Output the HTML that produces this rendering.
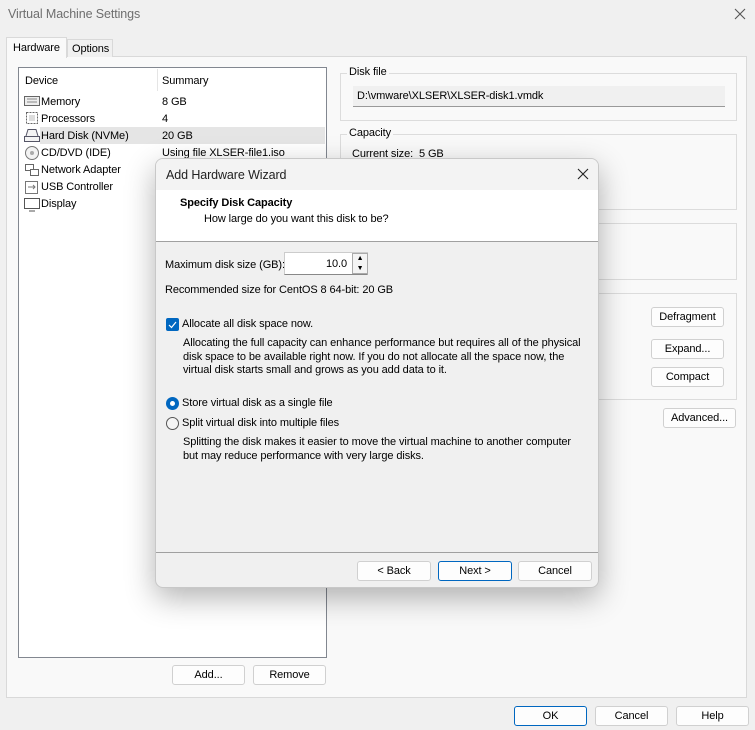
<!DOCTYPE html>
<html><head><meta charset="utf-8"><style>
*{box-sizing:border-box;margin:0;padding:0}
body{width:755px;height:730px;background:#f0f0f0;font-family:"Liberation Sans",sans-serif;font-size:11px;letter-spacing:-0.1px;color:#000;position:relative;overflow:hidden}
.a{position:absolute;white-space:nowrap}
.btn{position:absolute;height:20px;background:#fdfdfd;border:1px solid #d0d0d0;border-radius:3px;text-align:center;line-height:18px}
.grp{position:absolute;border:1px solid #dcdcdc}
.lg{position:absolute;top:-8px;left:6px;background:#f9f9f9;padding:0 2px}
</style></head><body>
<div class="a" style="left:8px;top:7px;font-size:12.5px;color:#6e6e6e">Virtual Machine Settings</div>
<svg class="a" style="left:734px;top:8px" width="12" height="12"><path d="M1 1L11 11M11 1L1 11" stroke="#555" stroke-width="1.1"/></svg>

<div class="a" style="left:6px;top:56px;width:741px;height:642px;background:#f9f9f9;border:1px solid #d9d9d9"></div>
<div class="a" style="left:6px;top:37px;width:61px;height:21px;background:#f9f9f9;border:1px solid #d9d9d9;border-bottom:none;padding:4px 0 0 6px">Hardware</div>
<div class="a" style="left:67px;top:39px;width:46px;height:18px;background:#f0f0f0;border:1px solid #d9d9d9;border-bottom:none;padding:3px 0 0 4px">Options</div>

<div class="a" style="left:18px;top:67px;width:309px;height:591px;background:#fff;border:1px solid #828790"></div>
<div class="a" style="left:157px;top:69px;width:1px;height:22px;background:#e5e5e5"></div>
<div class="a" style="left:25px;top:75px">Device</div>
<div class="a" style="left:162px;top:75px">Summary</div>
<div class="a" style="left:40px;top:127px;width:285px;height:17px;background:#e5e5e5"></div>
<svg class="a" style="left:24px;top:95px" width="16" height="120">
<rect x="0.5" y="1.5" width="15" height="9" fill="#eee" stroke="#666"/><path d="M3 4h10M3 7h10" stroke="#888"/>
<rect x="2.5" y="17.5" width="11" height="11" fill="#fff" stroke="#666" stroke-dasharray="2 1"/><rect x="5" y="20" width="6" height="6" fill="#ddd"/>
<path d="M0.5 41.5h15v5h-15zM2 41L4 34.5h8L14 41" fill="#f4f4f4" stroke="#556"/>
<circle cx="8" cy="58" r="6.5" fill="#f2f2f2" stroke="#777"/><circle cx="8" cy="58" r="2" fill="#aaa"/>
<rect x="1.5" y="69.5" width="8" height="6" fill="#fff" stroke="#666"/><rect x="6.5" y="74.5" width="8" height="6" fill="#fff" stroke="#666"/>
<rect x="1.5" y="86.5" width="12" height="12" fill="#fff" stroke="#777"/><path d="M4 92h7M9 90l2 2-2 2" stroke="#777" fill="none"/>
<rect x="0.5" y="103.5" width="15" height="10" fill="#fff" stroke="#555"/><path d="M5 116h6" stroke="#555"/>
</svg>
<div class="a" style="left:41px;top:96px">Memory</div><div class="a" style="left:162px;top:96px">8 GB</div>
<div class="a" style="left:41px;top:113px">Processors</div><div class="a" style="left:162px;top:113px">4</div>
<div class="a" style="left:41px;top:130px">Hard Disk (NVMe)</div><div class="a" style="left:162px;top:130px">20 GB</div>
<div class="a" style="left:41px;top:147px">CD/DVD (IDE)</div><div class="a" style="left:162px;top:147px">Using file XLSER-file1.iso</div>
<div class="a" style="left:41px;top:164px">Network Adapter</div>
<div class="a" style="left:41px;top:181px">USB Controller</div>
<div class="a" style="left:41px;top:198px">Display</div>

<div class="btn" style="left:172px;top:665px;width:73px">Add...</div>
<div class="btn" style="left:253px;top:665px;width:73px">Remove</div>

<div class="grp" style="left:340px;top:73px;width:397px;height:48px"><div class="lg">Disk file</div></div>
<div class="a" style="left:353px;top:86px;width:372px;height:21px;background:#f0f0f0;border-bottom:1px solid #999;padding:4px 0 0 4px">D:\vmware\XLSER\XLSER-disk1.vmdk</div>
<div class="grp" style="left:340px;top:134px;width:397px;height:76px"><div class="lg">Capacity</div></div>
<div class="a" style="left:352px;top:148px">Current size:&nbsp; 5 GB</div>
<div class="grp" style="left:340px;top:223px;width:397px;height:57px"></div>
<div class="grp" style="left:340px;top:293px;width:397px;height:107px"></div>
<div class="btn" style="left:651px;top:307px;width:73px">Defragment</div>
<div class="btn" style="left:651px;top:339px;width:73px">Expand...</div>
<div class="btn" style="left:651px;top:367px;width:73px">Compact</div>
<div class="btn" style="left:663px;top:408px;width:73px">Advanced...</div>

<div class="btn" style="left:514px;top:706px;width:73px;border:1px solid #0067c0">OK</div>
<div class="btn" style="left:595px;top:706px;width:73px">Cancel</div>
<div class="btn" style="left:676px;top:706px;width:73px">Help</div>

<div class="a" style="left:155px;top:158px;width:444px;height:430px;background:#f0f0f0;border:1px solid #c8c8c8;border-radius:8px;box-shadow:0 10px 30px rgba(0,0,0,0.3);overflow:hidden">
<div class="a" style="left:0;top:0;width:444px;height:31px;background:#f3f3f3"></div>
<div class="a" style="left:10px;top:9px;font-size:12.5px;color:#222">Add Hardware Wizard</div>
<svg class="a" style="left:421px;top:9px" width="12" height="12"><path d="M1 1L11 11M11 1L1 11" stroke="#222" stroke-width="1.1"/></svg>
<div class="a" style="left:0;top:31px;width:444px;height:52px;background:#fff;border-bottom:1px solid #a0a0a0"></div>
<div class="a" style="left:24px;top:38px;font-weight:bold">Specify Disk Capacity</div>
<div class="a" style="left:48px;top:54px">How large do you want this disk to be?</div>
<div class="a" style="left:9px;top:100px">Maximum disk size (GB):</div>
<div class="a" style="left:128px;top:93px;width:84px;height:23px;background:#fff;border:1px solid #ccc;border-bottom:1px solid #888;text-align:right;padding:5px 20px 0 0">10.0</div>
<div class="a" style="left:196px;top:94px;width:16px;height:21px;border:1px solid #aaa;background:#f4f4f4;font-size:7px;line-height:10px;text-align:center">▲<br>▼</div>
<div class="a" style="left:9px;top:125px">Recommended size for CentOS 8 64-bit: 20 GB</div>
<div class="a" style="left:10px;top:159px;width:13px;height:13px;background:#0067c0;border-radius:2px"></div>
<svg class="a" style="left:12px;top:161px" width="9" height="9"><path d="M1 5l2.5 2.5L8 2" stroke="#fff" fill="none" stroke-width="1.2"/></svg>
<div class="a" style="left:26px;top:159px">Allocate all disk space now.</div>
<div class="a" style="left:27px;top:178px;line-height:13.5px">Allocating the full capacity can enhance performance but requires all of the physical<br>disk space to be available right now. If you do not allocate all the space now, the<br>virtual disk starts small and grows as you add data to it.</div>
<div class="a" style="left:10px;top:238px;width:13px;height:13px;border-radius:50%;background:#0067c0"></div>
<div class="a" style="left:14px;top:242px;width:5px;height:5px;border-radius:50%;background:#fff"></div>
<div class="a" style="left:26px;top:238px">Store virtual disk as a single file</div>
<div class="a" style="left:10px;top:258px;width:13px;height:13px;border-radius:50%;border:1px solid #555;background:#f5f5f5"></div>
<div class="a" style="left:26px;top:258px">Split virtual disk into multiple files</div>
<div class="a" style="left:27px;top:277px;line-height:13.5px">Splitting the disk makes it easier to move the virtual machine to another computer<br>but may reduce performance with very large disks.</div>
<div class="a" style="left:0;top:393px;width:444px;height:1px;background:#a0a0a0"></div>
<div class="btn" style="left:201px;top:402px;width:74px">&lt; Back</div>
<div class="btn" style="left:282px;top:402px;width:74px;border:1px solid #0067c0">Next &gt;</div>
<div class="btn" style="left:362px;top:402px;width:74px">Cancel</div>
</div>
</body></html>
